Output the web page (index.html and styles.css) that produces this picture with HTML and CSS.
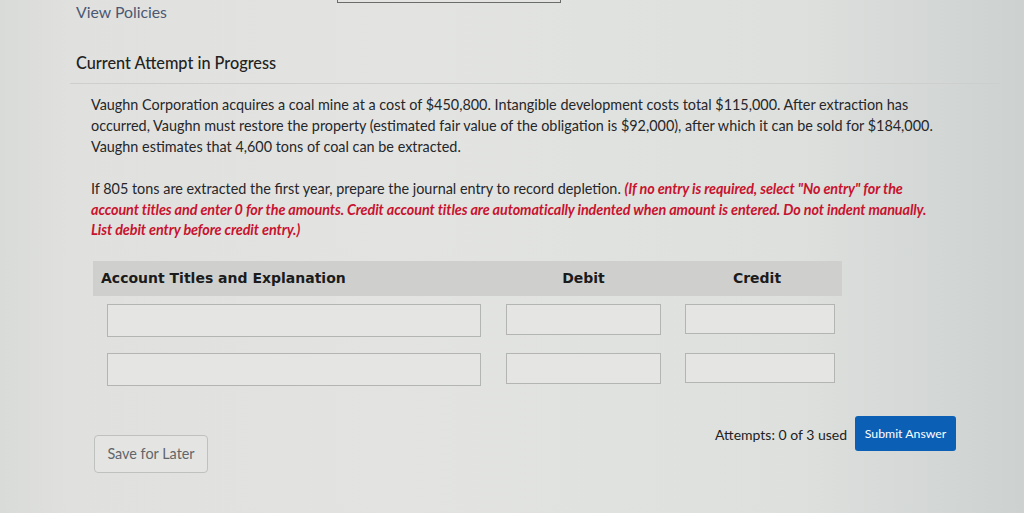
FILE: index.html
```html
<!DOCTYPE html>
<html lang="en">
<head>
<meta charset="utf-8">
<title>Current Attempt in Progress</title>
<link rel="stylesheet" href="styles.css">
</head>
<body>
<div class="page">
  <div class="topbar">
    <a class="policies">View Policies</a>
    <div class="stub"></div>
  </div>
  <div class="attempt-head">Current Attempt in Progress</div>
  <div class="question">
    <p class="intro">Vaughn Corporation acquires a coal mine at a cost of $450,800. Intangible development costs total $115,000. After extraction has occurred, Vaughn must restore the property (estimated fair value of the obligation is $92,000), after which it can be sold for $184,000. Vaughn estimates that 4,600 tons of coal can be extracted.</p>
    <p class="task">If 805 tons are extracted the first year, prepare the journal entry to record depletion. <em class="note">(If no entry is required, select "No entry" for the account titles and enter 0 for the amounts. Credit account titles are automatically indented when amount is entered. Do not indent manually. List debit entry before credit entry.)</em></p>
    <div class="journal">
      <div class="jhead">
        <div class="col-account">Account Titles and Explanation</div>
        <div class="col-debit">Debit</div>
        <div class="col-credit">Credit</div>
      </div>
      <div class="jrow">
        <div class="field field-account"></div>
        <div class="field field-debit"></div>
        <div class="field field-credit"></div>
      </div>
      <div class="jrow">
        <div class="field field-account"></div>
        <div class="field field-debit"></div>
        <div class="field field-credit"></div>
      </div>
    </div>
    <div class="footer">
      <button class="btn-save">Save for Later</button>
      <div class="submit-group">
        <span class="attempts">Attempts: 0 of 3 used</span>
        <button class="btn-submit">Submit Answer</button>
      </div>
    </div>
  </div>
</div>
</body>
</html>
```
FILE: styles.css
```css
html, body {
  margin: 0;
  padding: 0;
}
body {
  width: 1024px;
  height: 513px;
  overflow: hidden;
  font-family: Lato, "Liberation Sans", sans-serif;
  color: #2a2b2c;
  background: linear-gradient(90deg, #d9dbd8 0px, #e0e1de 70px, #e3e4e1 400px, #dde0dd 800px, #cdd1d0 1024px);
}
.page {
  margin-left: 70px;
  width: 930px;
}
.topbar {
  display: flex;
  align-items: flex-start;
  height: 24px;
  padding-left: 6px;
}
.policies {
  font-size: 15.8px;
  line-height: 20px;
  margin-top: 2px;
  color: #4b5874;
}
.stub {
  margin-left: 170px;
  margin-top: -26px;
  width: 222px;
  height: 27px;
  border: 1px solid #6a6c6c;
  background: #e4e5e2;
}
.attempt-head {
  margin-top: 29px;
  padding-left: 6px;
  padding-bottom: 10px;
  font-size: 16.3px;
  line-height: 20px;
  font-weight: 500;
  color: #222;
  border-bottom: 1px solid #cdcfcc;
}
.question {
  padding-left: 21px;
  padding-top: 10px;
}
.intro, .task {
  margin: 0;
  font-size: 14.4px;
  line-height: 21px;
  color: #26272a;
}
.intro {
  width: 850px;
}
.task {
  width: 842px;
  margin-top: 22px;
  line-height: 20.5px;
}
.note {
  color: #c8132f;
  font-style: italic;
  font-weight: 700;
  letter-spacing: -0.1px;
}
.journal {
  margin-top: 20px;
  margin-left: 2px;
  width: 749px;
}
.jhead {
  display: grid;
  grid-template-columns: 388px 155px 149px;
  column-gap: 25px;
  align-items: center;
  height: 35px;
  background: #cfd0ce;
  font-family: "DejaVu Sans", Verdana, sans-serif;
  font-weight: 700;
  font-size: 14px;
  color: #1b1b1b;
}
.col-account {
  padding-left: 8px;
}
.col-debit, .col-credit {
  text-align: center;
}
.col-credit {
  margin-left: -1px;
  padding-right: 6px;
}
.jrow {
  display: grid;
  grid-template-columns: 374px 155px 149px;
  column-gap: 25px;
  align-items: start;
  padding-left: 14px;
  margin-top: 8px;
}
.jrow + .jrow {
  margin-top: 16px;
}
.field {
  border: 1px solid #b3b5b3;
  background: #e5e6e3;
  box-sizing: border-box;
  height: 33px;
}
.field-debit {
  height: 31px;
}
.field-credit {
  height: 30px;
  margin-left: -1px;
}
.footer {
  display: flex;
  justify-content: space-between;
  align-items: flex-start;
  width: 862px;
  margin-top: 30px;
  margin-left: 3px;
}
.btn-save {
  margin-top: 19px;
  width: 114px;
  height: 38px;
  border: 1px solid #bfc1bf;
  border-radius: 4px;
  background: #e4e5e2;
  font-family: Lato, "Liberation Sans", sans-serif;
  font-size: 14.4px;
  color: #62656a;
  padding: 0;
}
.submit-group {
  display: flex;
  align-items: center;
  gap: 8px;
}
.attempts {
  font-size: 14px;
  color: #222;
  margin-top: 2px;
}
.btn-submit {
  width: 101px;
  height: 35px;
  border: none;
  border-radius: 3px;
  background: #0b60b5;
  color: #fff;
  font-family: Lato, "Liberation Sans", sans-serif;
  font-size: 12.3px;
  padding: 0;
}
```
